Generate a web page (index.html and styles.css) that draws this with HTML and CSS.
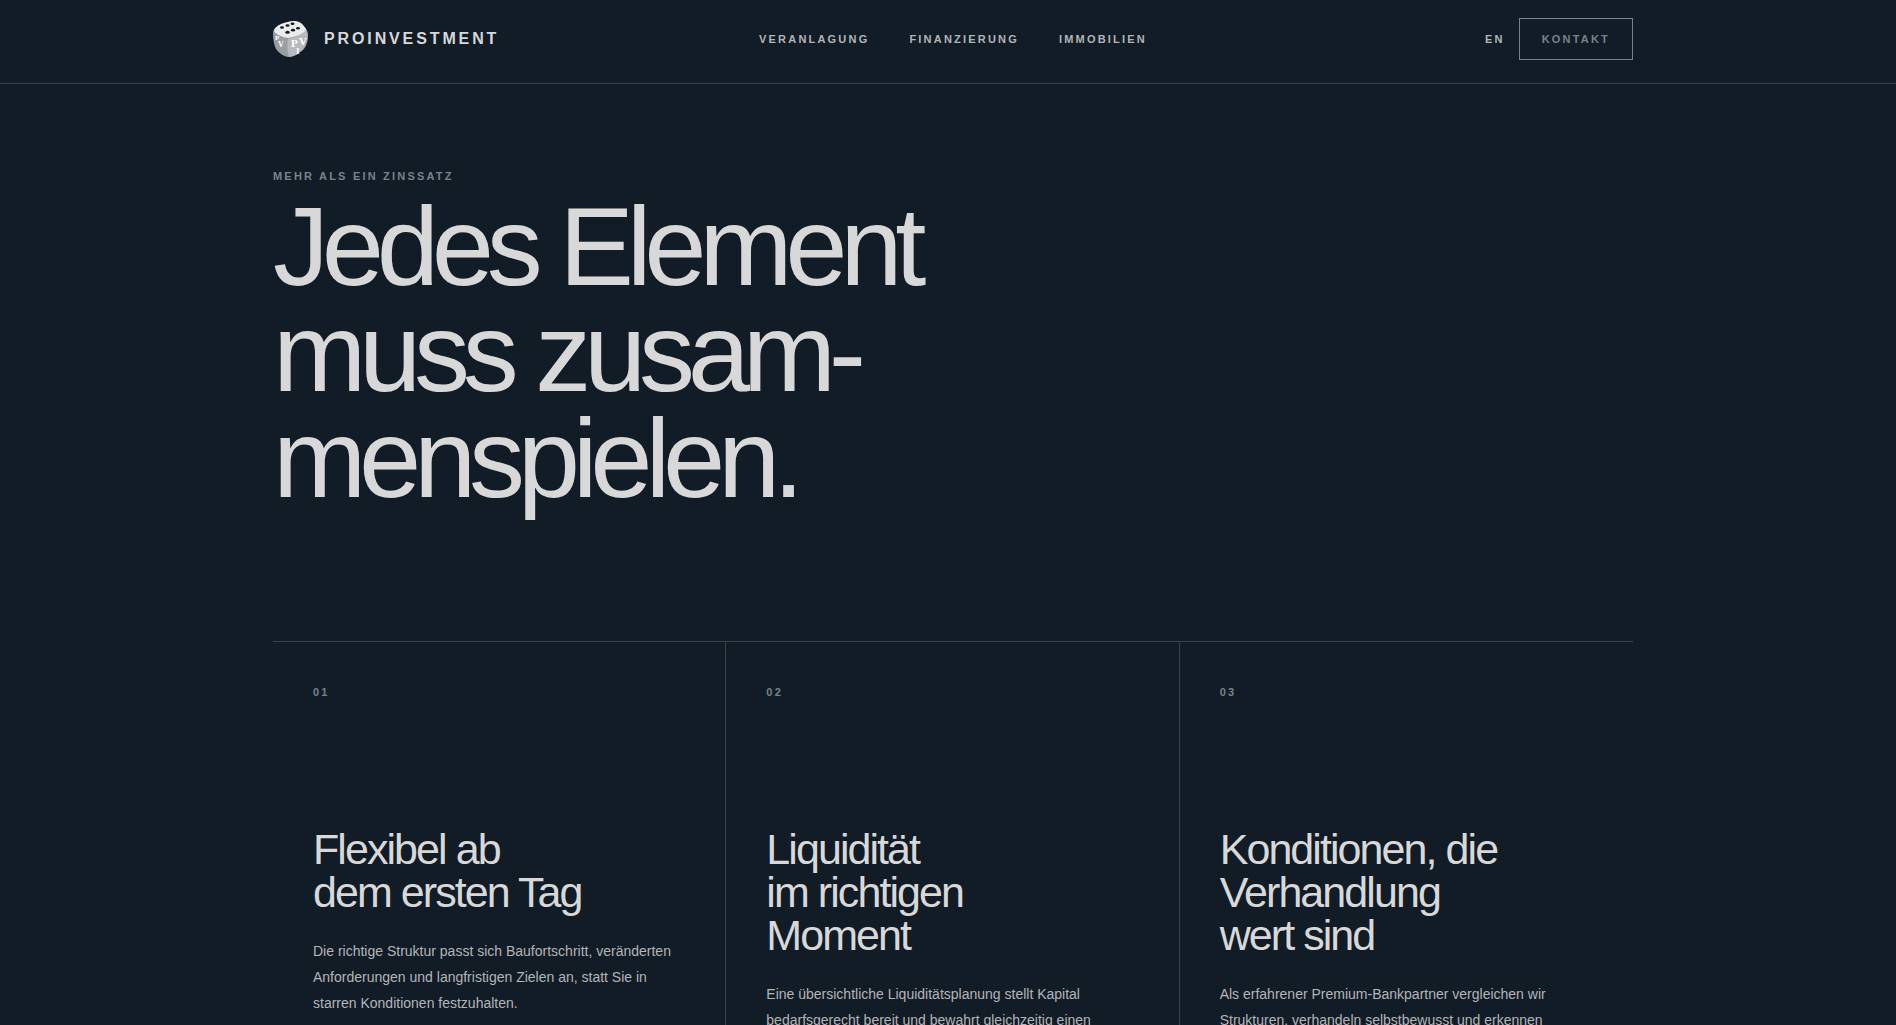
FILE: index.html
```
<!DOCTYPE html>
<html lang="de">
  <head>
    <meta charset="utf-8">
    <meta name="viewport" content="width=device-width, initial-scale=1">
    <title>PROINVESTMENT</title>
    <link rel="stylesheet" href="styles.css">
  </head>
  <body>

    <header class="header">
      <div class="container header-inner">
        <a class="brand" href="#">
          <svg class="brand-logo" viewBox="0 0 35 36" aria-hidden="true">
            <path fill="#999ea2" d="M1 9C3 4 12 1 20 0c6 0 9 2 13 8 2 3 2 6 2 9-1 7-3 10-5 12-4 3-8 7-14 7-5 0-10-4-13-8C1 24 0 18 0 13c0-2 0-3 1-4z"/>
            <path fill="#b7babd" d="M15 18c6-1 14-5 19-9 1 7 0 13-4 19-4 4-8 7-14 8-2-6-2-12-1-18z"/>
            <path fill="#ebebec" d="M1 9C3 4 12 1 20 0c6 0 9 2 13 8 1 3-10 8-18 9C9 16 1 13 1 9z"/>
            <g fill="#121c26">
              <ellipse cx="9" cy="6.500" rx="2" ry="1.300"/>
              <ellipse cx="14.500" cy="4.500" rx="2" ry="1.300"/>
              <ellipse cx="19.500" cy="2.700" rx="2" ry="1.300"/>
              <ellipse cx="14.500" cy="11.300" rx="2.200" ry="1.500"/>
              <ellipse cx="20" cy="9.200" rx="2.100" ry="1.400"/>
              <ellipse cx="25" cy="7.200" rx="2" ry="1.300"/>
            </g>
            <g fill="#ffffff" font-family="Liberation Serif, serif">
              <text x="18" y="26" font-size="11">P<tspan x="26" y="24">V</tspan></text>
              <text x="23" y="33" font-size="9">I</text>
              <text x="2" y="19" font-size="7">P</text>
              <text x="5" y="26" font-size="8">V</text>
            </g>
          </svg>
          <span>PROINVESTMENT</span>
        </a>
        <nav class="nav">
          <a href="#">VERANLAGUNG</a>
          <a href="#">FINANZIERUNG</a>
          <a href="#">IMMOBILIEN</a>
        </nav>
        <div class="header-actions">
          <a href="#">EN</a>
          <a class="btn" href="#">KONTAKT</a>
        </div>
      </div>
    </header>

    <main class="main">
      <div class="container">
        <section class="hero">
          <p class="label">MEHR ALS EIN ZINSSATZ</p>
          <h1>Jedes Element<br>muss zusam-<br>menspielen.</h1>
        </section>

        <section class="features">
          <article class="feature">
            <span class="label">01</span>
            <h2>Flexibel ab<br>dem ersten Tag</h2>
            <p>Die richtige Struktur passt sich Baufortschritt, veränderten Anforderungen und langfristigen Zielen an, statt Sie in starren Konditionen festzuhalten.</p>
          </article>
          <article class="feature">
            <span class="label">02</span>
            <h2>Liquidität<br>im richtigen<br>Moment</h2>
            <p>Eine übersichtliche Liquiditätsplanung stellt Kapital bedarfsgerecht bereit und bewahrt gleichzeitig einen</p>
          </article>
          <article class="feature">
            <span class="label">03</span>
            <h2>Konditionen, die<br>Verhandlung<br>wert sind</h2>
            <p>Als erfahrener Premium-Bankpartner vergleichen wir Strukturen, verhandeln selbstbewusst und erkennen</p>
          </article>
        </section>
      </div>
    </main>

  </body>
</html>
```
FILE: styles.css
```
* {
  box-sizing: border-box;
}
html, body {
  height: 100%;
  margin: 0;
  overflow: hidden;
}
body {
  background: #121c26;
  color: #d8d8d8;
  font-family: "Liberation Sans", Arial, sans-serif;
}
a {
  color: inherit;
  text-decoration: none;
}
h1, h2, p {
  margin: 0;
  font-weight: 400;
}

.container {
  max-width: 1360px;
  margin: 0 auto;
}

.header {
  padding: 18px 0 23px 10px;
  border-bottom: 1px solid #37424b;
}
.header-inner {
  display: grid;
  grid-template-columns: 1fr auto 1fr;
  align-items: center;
}
.brand {
  display: flex;
  align-items: center;
  gap: 16px;
  font-size: 16px;
  font-weight: 700;
  letter-spacing: 0.18em;
}
.brand-logo {
  width: 35px;
  height: 36px;
  overflow: visible;
}
.nav, .header-actions {
  color: #b2b5b8;
  font-size: 11px;
  font-weight: 700;
  letter-spacing: 0.2em;
}
.nav {
  display: flex;
  gap: 40px;
}
.header-actions {
  display: flex;
  align-items: center;
  justify-content: flex-end;
  gap: 14px;
}
.btn {
  padding: 0 22px;
  border: 1px solid #77838a;
  color: #77838a;
  line-height: 40px;
}

.label {
  color: #77838a;
  font-size: 11px;
  font-weight: 700;
  line-height: 16px;
  letter-spacing: 0.2em;
}

.main {
  padding-left: 10px;
}
.hero {
  padding: 84px 0 129px;
}
.hero h1 {
  margin-top: 10px;
  font-size: 112px;
  line-height: 106px;
  letter-spacing: -0.065em;
}

.features {
  display: grid;
  grid-template-columns: repeat(3, 1fr);
  border-top: 1px solid #37424b;
}
.feature {
  padding: 42px 40px;
  border-right: 1px solid #37424b;
}
.feature:last-child {
  border-right: 0;
}
.feature .label {
  display: block;
}
.feature h2 {
  margin: 128px 0 24px;
  font-size: 43px;
  line-height: 43px;
  letter-spacing: -0.045em;
}
.feature p {
  color: #b2b5b8;
  font-size: 14px;
  line-height: 26px;
}
```
